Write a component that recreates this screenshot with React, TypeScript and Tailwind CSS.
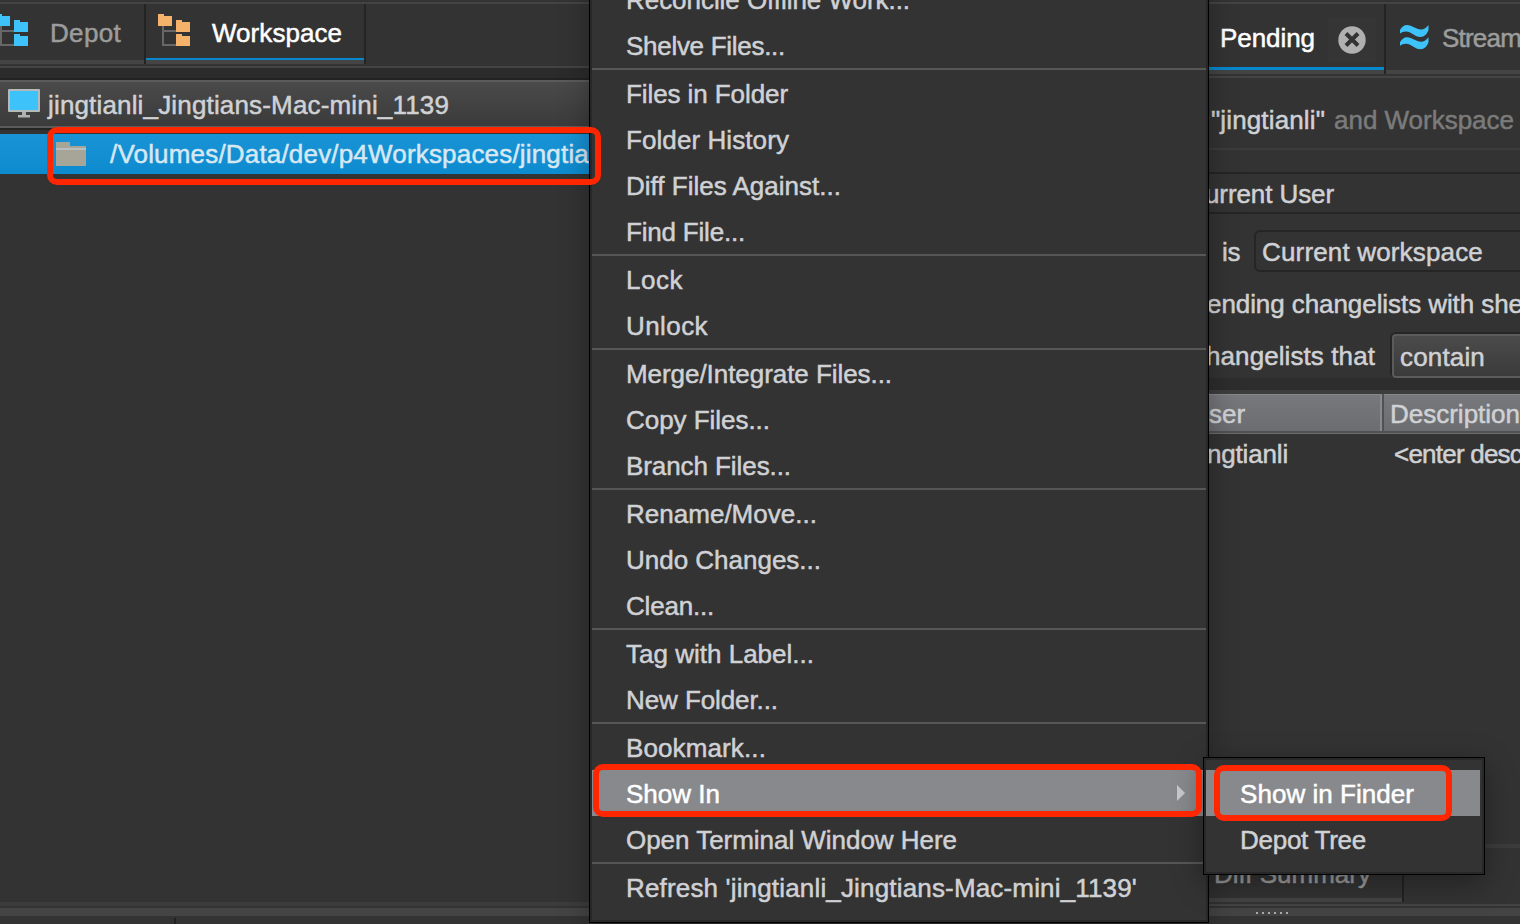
import React, { useLayoutEffect, useRef, useState } from 'react';

/** A single line of text whose letter spacing is adjusted to fill `w` pixels. */
function Label({ w, children, className = '' }: { w: number; children: string; className?: string }) {
  const ref = useRef<HTMLSpanElement>(null);
  const [spacing, setSpacing] = useState(0);
  useLayoutEffect(() => {
    if (ref.current) {
      const natural = ref.current.getBoundingClientRect().width;
      setSpacing((w - natural) / children.length);
    }
  }, []);
  return (
    <span
      ref={ref}
      style={{ letterSpacing: spacing }}
      className={`shrink-0 whitespace-pre [-webkit-text-stroke:0.5px_currentColor] ${className}`}
    >
      {children}
    </span>
  );
}

function TreeIcon({ className }: { className: string }) {
  return (
    <svg width="32" height="32" viewBox="0 0 32 32" className={`shrink-0 ${className}`} shapeRendering="crispEdges">
      <path d="M5 12V31H18M5 17H18" fill="none" stroke="#676767" strokeWidth="2" />
      <path
        fill="currentColor"
        d="M0 0H6V2H14V12H0ZM18 6H24V8H32V18H18ZM18 20H24V22H32V32H18Z"
      />
    </svg>
  );
}

function MonitorIcon() {
  return (
    <svg width="32" height="30" viewBox="0 0 32 30" className="shrink-0">
      <path fill="#aeb1b2" d="M14 22h4v4h4v2.500H10V26h4z" />
      <rect width="32" height="23" rx="1" fill="#b5b9ba" />
      <rect x="2" y="2" width="28" height="19" fill="#3dc3fa" />
    </svg>
  );
}

function FolderIcon() {
  return (
    <svg width="30" height="24" viewBox="0 0 30 24" className="shrink-0">
      <path fill="#a6a598" d="M0 0H14V4H30V24H0Z" />
      <rect y="6" width="30" height="2" fill="#b9bec0" />
    </svg>
  );
}

function StreamIcon() {
  const wave = 'M0 8.500V5C1.500 2 4 0 7 0C12 0 16 4.500 21 4.500C24 4.500 26.500 2.500 28.500 0V5C27 9 24.500 12 20.500 12C15 12 11 6.500 6 6.500C3.500 6.500 1.500 7.300 0 8.500Z';
  return (
    <svg width="29" height="25" viewBox="0 0 29 25" fill="#3dc3fa" className="shrink-0">
      <path d={wave} />
      <path d={wave} transform="translate(0 12.300)" />
    </svg>
  );
}

function CloseIcon() {
  return (
    <svg width="28" height="28" viewBox="0 0 28 28" className="shrink-0">
      <circle cx="14" cy="14" r="13.700" fill="#b0b0b0" />
      <path d="M8 7.500L20 19.500M20 7.500L8 19.500" stroke="#333" strokeWidth="4" />
    </svg>
  );
}

type Item = { text: string; w: number; active?: boolean };

const groups: Item[][] = [
  [
    { text: 'Reconcile Offline Work...', w: 284 },
    { text: 'Shelve Files...', w: 159 },
  ],
  [
    { text: 'Files in Folder', w: 162 },
    { text: 'Folder History', w: 163 },
    { text: 'Diff Files Against...', w: 215 },
    { text: 'Find File...', w: 119 },
  ],
  [
    { text: 'Lock', w: 57 },
    { text: 'Unlock', w: 82 },
  ],
  [
    { text: 'Merge/Integrate Files...', w: 266 },
    { text: 'Copy Files...', w: 144 },
    { text: 'Branch Files...', w: 165 },
  ],
  [
    { text: 'Rename/Move...', w: 191 },
    { text: 'Undo Changes...', w: 195 },
    { text: 'Clean...', w: 88 },
  ],
  [
    { text: 'Tag with Label...', w: 188 },
    { text: 'New Folder...', w: 152 },
  ],
  [
    { text: 'Bookmark...', w: 140 },
    { text: 'Show In', w: 94, active: true },
    { text: 'Open Terminal Window Here', w: 331 },
  ],
  [{ text: "Refresh 'jingtianli_Jingtians-Mac-mini_1139'", w: 511 }],
];

function MenuRow({ item }: { item: Item }) {
  return (
    <div
      className={`flex h-[46px] items-center justify-between pl-[34px] pr-[21px] pt-[2px] ${
        item.active ? 'bg-[#88898c] text-white' : ''
      }`}
    >
      <Label w={item.w}>{item.text}</Label>
      {item.active && (
        <svg width="8" height="16" viewBox="0 0 8 16" className="mb-[3px]">
          <path d="M0 0L8 8L0 16Z" fill="#c9c9cb" />
        </svg>
      )}
    </div>
  );
}

function ContextMenu() {
  return (
    <div className="absolute left-[589px] top-[-27px] h-[950px] w-[620px] border border-black bg-[#333333] shadow-[0_8px_28px_rgba(0,0,0,0.3)]">
      <div className="h-full border-2 border-[#282828]">
        {groups.map((group, i) => (
          <div key={i} className={i > 0 ? 'border-t-2 border-[#575757]' : ''}>
            {group.map((item) => (
              <MenuRow key={item.text} item={item} />
            ))}
          </div>
        ))}
      </div>
    </div>
  );
}

function SubMenu() {
  return (
    <div className="absolute left-[1203px] top-[757px] h-[118px] w-[282px] border border-black bg-[#333333] shadow-[0_8px_28px_rgba(0,0,0,0.35)]">
      <div className="h-full border-2 border-[#282828] pt-[10px]">
        <div className="mr-[2px] flex h-[46px] items-center bg-[#88898c] pl-[34px] pt-[2px] text-white">
          <Label w={174}>Show in Finder</Label>
        </div>
        <div className="flex h-[46px] items-center pl-[34px] pt-[2px]">
          <Label w={126}>Depot Tree</Label>
        </div>
      </div>
    </div>
  );
}

function LeftPanel() {
  return (
    <div className="flex w-[589px] shrink-0 flex-col overflow-hidden">
      <div className="h-1 shrink-0 border-b-2 border-[#444]" />
      <div className="flex h-[60px] shrink-0">
        <div className="flex w-[146px] items-start border-r-2 border-[#242424]">
          <div className="flex h-[60px] w-full items-center border-b-4 border-[#444] text-[#9c9c9c]">
            <TreeIcon className="-ml-1 mt-[-4px] text-[#3dc3fa]" />
            <Label w={71} className="ml-[22px] mt-[2px]">Depot</Label>
          </div>
        </div>
        <div className="flex w-[220px] flex-col border-r-2 border-[#242424]">
          <div className="flex h-14 items-center border-b-2 border-[#0788cd] pl-3 text-white">
            <TreeIcon className="mt-[-2px] text-[#f5b26b]" />
            <Label w={130} className="ml-[22px] mt-[4px]">Workspace</Label>
          </div>
          <div className="h-1 bg-[#444]" />
        </div>
      </div>
      <div className="h-1 shrink-0 border-b-2 border-[#444]" />
      <div className="h-3 shrink-0 border-b-2 border-[#222] bg-[#2b2b2b]" />
      <div className="flex h-12 shrink-0 items-center border-y-2 border-[#5b5b5b] bg-linear-to-b from-[#4a4a4a] to-[#3b3b3b] pl-2">
        <MonitorIcon />
        <Label w={401} className="ml-2 mt-[2px]">jingtianli_Jingtians-Mac-mini_1139</Label>
      </div>
      <div className="h-[6px] shrink-0 border-t-2 border-[#242424]" />
      <div className="flex h-10 shrink-0 items-center bg-linear-to-b from-[#1993d5] to-[#0d8bcf] pl-14 text-[#d7e8f3]">
        <FolderIcon />
        <Label w={479} className="ml-[24px]">/Volumes/Data/dev/p4Workspaces/jingtia</Label>
      </div>
      <div className="grow" />
      <div className="h-1 shrink-0 bg-[#3c3c3c]" />
      <div className="h-[2px] shrink-0" />
      <div className="h-2 shrink-0 bg-[#444]" />
      <div className="h-2 shrink-0 pt-[2px]">
        <div className="ml-[174px] h-full w-[2px] bg-[#222]" />
      </div>
    </div>
  );
}

function RightPanel() {
  return (
    <div className="ml-[620px] flex w-[311px] shrink-0 flex-col overflow-hidden">
      <div className="h-1 shrink-0 border-b-2 border-[#444]" />
      <div className="flex h-[70px] shrink-0">
        <div className="flex w-[177px] shrink-0 flex-col border-r-2 border-[#242424]">
          <div className="flex h-[66px] items-center border-b-3 border-[#0788cd] pl-[11px] text-white">
            <Label w={95} className="mt-[5px]">Pending</Label>
            <div className="ml-[13px] mt-[9px] flex h-[46px] w-12 items-center justify-center bg-[#353535]">
              <CloseIcon />
            </div>
          </div>
          <div className="h-1 bg-[#444]" />
        </div>
        <div className="flex grow items-center border-b-4 border-[#444] pl-[14px] text-[#9c9c9c]">
          <StreamIcon />
          <Label w={79} className="ml-[13px] mt-[2px]">Stream</Label>
        </div>
      </div>
      <div className="h-1 shrink-0 border-b-2 border-[#444]" />
      <div className="flex h-[72px] shrink-0 items-center border-b-2 border-[#3c3c3c] pt-[14px]">
        <Label w={114} className="ml-[2px]">"jingtianli"</Label>
        <Label w={180} className="ml-[9px] text-[#7b7b7b]">and Workspace</Label>
      </div>
      <div className="h-[22px] shrink-0" />
      <div className="flex h-[42px] shrink-0 items-center border-y-2 border-[#252525]">
        <Label w={129} className="-ml-[4px] mt-[2px]">urrent User</Label>
      </div>
      <div className="mt-4 flex h-[42px] shrink-0 items-center">
        <div className="h-9 w-[1px] bg-[#282828]" />
        <Label w={18} className="ml-[13px] mt-[2px]">is</Label>
        <div className="ml-[14px] flex h-[42px] w-[300px] shrink-0 items-center rounded-md border-2 border-[#252525] pl-[6px]">
          <Label w={221} className="mt-[2px]">Current workspace</Label>
        </div>
      </div>
      <div className="mt-[10px] flex h-[46px] shrink-0 items-center pb-[2px]">
        <Label w={316} className="-ml-[2px]">ending changelists with she</Label>
      </div>
      <div className="flex h-[50px] shrink-0 items-start pt-[4px]">
        <Label w={169} className="-ml-[3px] mt-[9px]">hangelists that</Label>
        <div className="ml-[15px] h-[46px] w-[300px] shrink-0 rounded-md border-2 border-b-0 border-[#252525]">
          <div className="flex h-[44px] items-center rounded-sm border-2 border-[#5b5b5b] bg-linear-to-b from-[#4b4b4b] to-[#3b3b3b] pl-[6px]">
            <Label w={85} className="mt-[2px]">contain</Label>
          </div>
        </div>
      </div>
      <div className="h-4 shrink-0 border-b-4 border-[#3d3d3d] bg-[#2d2d2d]" />
      <div className="flex h-10 shrink-0 border-b border-[#6b6b6b] bg-[#505153] pb-[2px]">
        <div className="flex w-[174px] items-center border-r-2 border-t border-[#88898c] bg-linear-to-b from-[#77787b] to-[#6c6d70]">
          <Label w={36} className="mt-[2px]">ser</Label>
        </div>
        <div className="ml-[2px] flex grow items-center border-t border-[#88898c] bg-linear-to-b from-[#77787b] to-[#6c6d70] pl-[6px]">
          <Label w={130} className="mt-[2px]">Description</Label>
        </div>
      </div>
      <div className="flex h-10 shrink-0 items-center">
        <div className="flex w-[185px] shrink-0">
          <Label w={81} className="-ml-[2px]">ngtianli</Label>
        </div>
        <Label w={128}>{'<enter desc'}</Label>
      </div>
      <div className="grow" />
      <div className="h-1 shrink-0 bg-[#3c3c3c]" />
      <div className="flex h-[54px] w-[195px] shrink-0 items-center border-r-2 border-[#222]">
        <div className="flex h-[54px] w-full items-center border-b-4 border-[#444] pt-[2px] text-[#9c9c9c]">
          <Label w={157} className="ml-[5px]">Diff Summary</Label>
        </div>
      </div>
      <div className="h-1 shrink-0 border-b-2 border-[#444]" />
      <div className="h-[2px] shrink-0" />
      <div className="flex h-2 shrink-0 items-center gap-1 bg-[#444] pl-[47px] pt-[2px]">
        {[0, 1, 2, 3, 4, 5].map((n) => (
          <div key={n} className="size-[2px] bg-[#aaa]" />
        ))}
      </div>
      <div className="h-2 shrink-0" />
    </div>
  );
}

export default function App() {
  return (
    <div className="relative flex h-[924px] w-[1520px] overflow-hidden bg-[#333333] font-['Liberation_Sans',sans-serif] text-[26px] leading-[30px] text-[#d0d1d4]">
      <LeftPanel />
      <RightPanel />
      <ContextMenu />
      <SubMenu />
      <div className="absolute left-[47px] top-[127px] h-[58px] w-[554px] rounded-[10px] border-6 border-[#ff2600]" />
      <div className="absolute left-[593px] top-[764px] h-[53px] w-[609px] rounded-[10px] border-6 border-[#ff2600]" />
      <div className="absolute left-[1214px] top-[765px] h-[56px] w-[238px] rounded-[10px] border-6 border-[#ff2600]" />
    </div>
  );
}
